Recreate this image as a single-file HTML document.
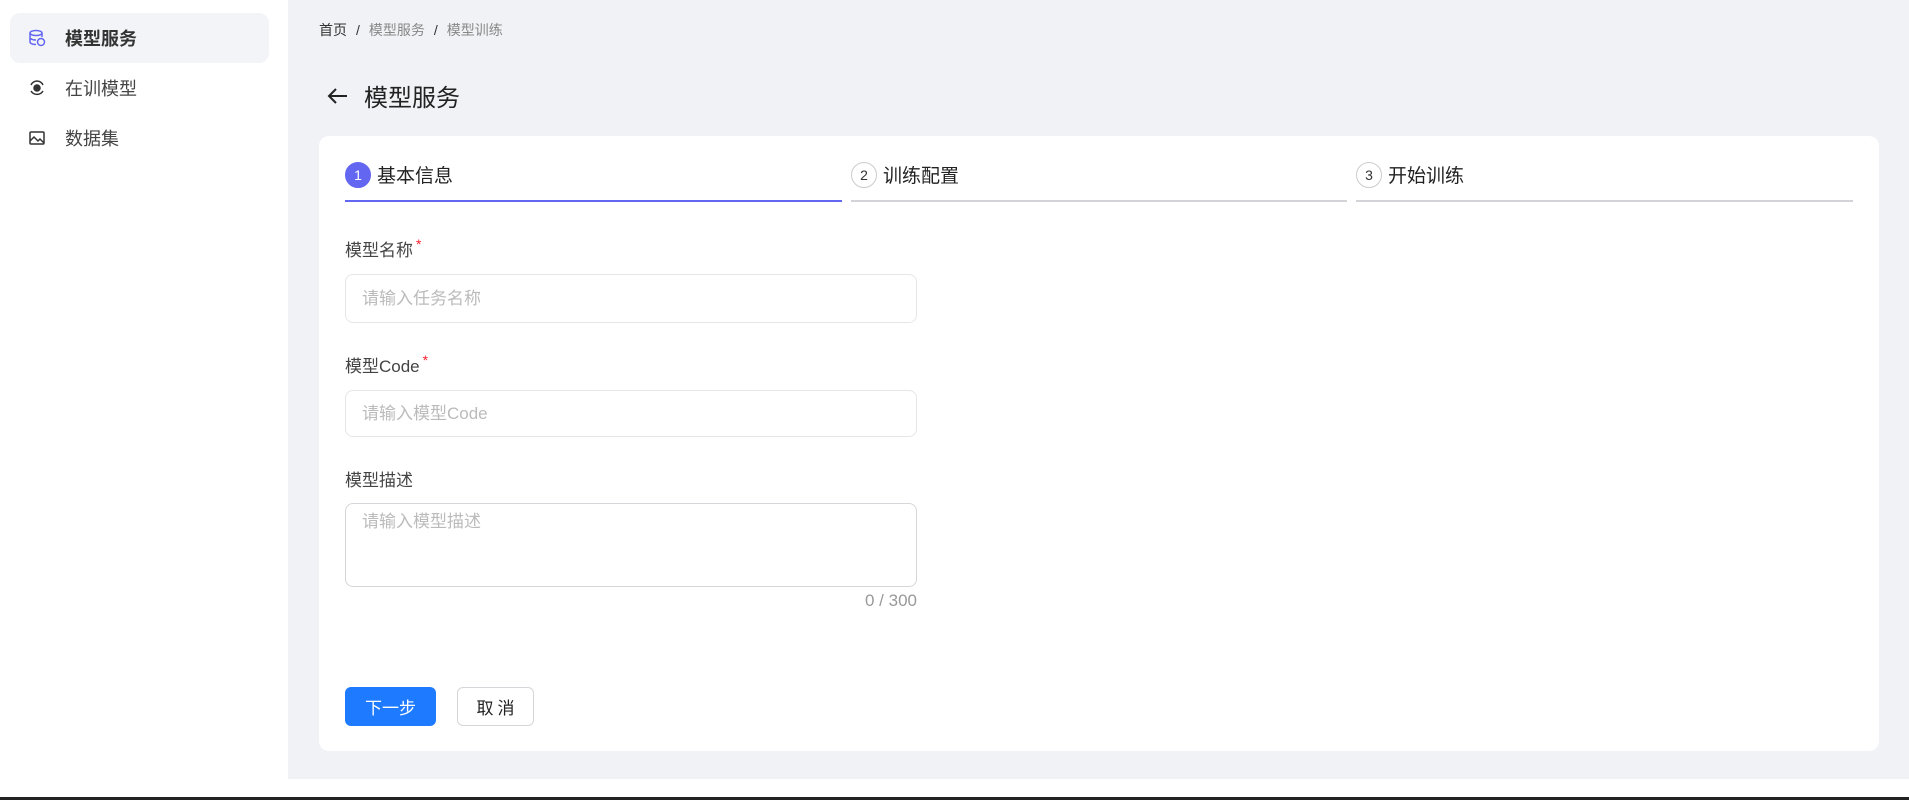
<!DOCTYPE html>
<html><head><meta charset="utf-8"><style>
*{box-sizing:border-box;margin:0;padding:0}
body{width:1909px;height:800px;overflow:hidden;background:#fff;font-family:"Liberation Sans","Noto Sans CJK SC",sans-serif;position:relative;color:#333}
.side{position:absolute;left:0;top:0;width:288px;height:779px;background:#fff}
.item{position:absolute;left:10px;width:259px;height:50px;display:flex;align-items:center;font-size:18px;color:#444}
.item .ic{position:absolute;left:18px;top:16px}
.item span{position:absolute;left:55px}
.item.act{background:#f3f4f7;border-radius:10px;font-weight:bold;color:#333}
.main{position:absolute;left:288px;top:0;width:1621px;height:779px;background:#f1f2f6}
.bc{position:absolute;left:31px;top:20px;font-size:14px;color:#888}
.bc b{font-weight:normal;color:#333}
.bc i{font-style:normal;color:#333;margin:0 9px}
.title{position:absolute;left:38px;top:78px;font-size:24px;color:#222;display:flex;align-items:center}
.card{position:absolute;left:31px;top:136px;width:1560px;height:615px;background:#fff;border-radius:10px}
.step{position:absolute;top:26px;height:40px;border-bottom:2px solid #d3d3d8;font-size:19px;color:#222}
.step .c{position:absolute;left:0;top:0;width:26px;height:26px;border-radius:50%;border:1px solid #ccc;font-size:14px;text-align:center;line-height:24px;color:#333}
.step .t{position:absolute;left:32px;top:-1px}
.step.on{border-bottom-color:#6366f1}
.step.on .c{background:#6366f1;border-color:#6366f1;color:#fff}
.lab{position:absolute;left:26px;font-size:17px;color:#444}
.lab sup{color:#f5222d;font-size:14px;margin-left:3px}
.inp{position:absolute;left:26px;width:572px;border:1px solid #e6e6ea;border-radius:8px;font-size:17px;color:#bbb;padding-left:16px}
.btn{position:absolute;top:551px;height:39px;border-radius:6px;font-size:17px;display:flex;align-items:center;justify-content:center}
</style></head><body>
<div class="side">
 <div class="item act" style="top:13px"><svg class="ic" width="18" height="18" viewBox="0 0 18 18" fill="none" stroke="#6366f1" stroke-width="1.5"><ellipse cx="8" cy="4" rx="6" ry="2.5"/><path d="M2 4v9c0 1.4 2.7 2.5 6 2.5M14 4v4M2 8.5c0 1.4 2.7 2.5 6 2.5"/><circle cx="13" cy="13" r="3.5"/></svg><span>模型服务</span></div>
 <div class="item" style="top:63px"><svg class="ic" width="18" height="18" viewBox="0 0 18 18" fill="none" stroke="#333" stroke-width="1.5"><path d="M3 6a7 7 0 0 1 6-4M15 6a7 7 0 0 0-6-4M3 12a7 7 0 0 0 12 0"/><circle cx="9" cy="9" r="3" fill="#333"/></svg><span>在训模型</span></div>
 <div class="item" style="top:113px"><svg class="ic" width="18" height="18" viewBox="0 0 18 18" fill="none" stroke="#333" stroke-width="1.5"><rect x="2" y="3" width="14" height="12" rx="1"/><path d="M2 12l4-4 4 4 2-2 4 4"/></svg><span>数据集</span></div>
</div>
<div class="main">
 <div class="bc"><b>首页</b><i>/</i>模型服务<i>/</i>模型训练</div>
 <div class="title"><svg width="24" height="24" viewBox="0 0 24 24" fill="none" stroke="#222" stroke-width="2"><path d="M21 12H4M10 5l-7 7 7 7"/></svg><span style="margin-left:14px">模型服务</span></div>
 <div class="card">
  <div class="step on" style="left:26px;width:497px"><div class="c">1</div><div class="t">基本信息</div></div>
  <div class="step" style="left:532px;width:496px"><div class="c">2</div><div class="t">训练配置</div></div>
  <div class="step" style="left:1037px;width:497px"><div class="c">3</div><div class="t">开始训练</div></div>
  <div class="lab" style="top:100px">模型名称<sup>*</sup></div>
  <div class="inp" style="top:138px;height:49px;line-height:47px">请输入任务名称</div>
  <div class="lab" style="top:216px">模型Code<sup>*</sup></div>
  <div class="inp" style="top:254px;height:47px;line-height:45px">请输入模型Code</div>
  <div class="lab" style="top:330px">模型描述</div>
  <div class="inp" style="top:367px;height:84px;line-height:30px;padding-top:3px;border-color:#d6d6da">请输入模型描述</div>
  <div style="position:absolute;left:26px;width:572px;top:455px;text-align:right;font-size:17px;color:#999">0 / 300</div>
  <div class="btn" style="left:26px;width:91px;background:#1e7bff;color:#fff">下一步</div>
  <div class="btn" style="left:138px;width:77px;border:1px solid #d6d6da;color:#222;letter-spacing:4px;padding-left:4px">取消</div>
 </div>
</div>
<div style="position:absolute;left:0;top:797px;width:1909px;height:3px;background:#222"></div>
</body></html>
